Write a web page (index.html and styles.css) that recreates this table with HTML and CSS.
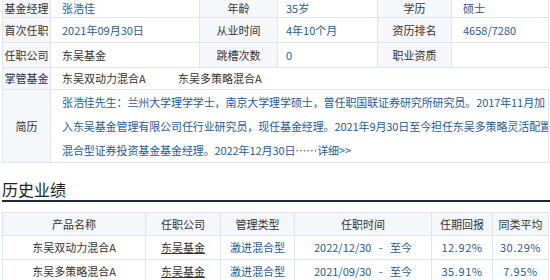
FILE: index.html
```html
<!DOCTYPE html>
<html lang="zh-CN">
<head>
<meta charset="utf-8">
<link rel="stylesheet" href="styles.css">
</head>
<body>
<div class="page">
  <table class="info">
    <colgroup>
      <col class="c1"><col class="c2"><col class="c3"><col class="c4"><col class="c5"><col class="c6">
    </colgroup>
    <tr class="r first">
      <th>基金经理</th><td class="blue">张浩佳</td>
      <th>年龄</th><td class="blue tight">35岁</td>
      <th>学历</th><td class="blue">硕士</td>
    </tr>
    <tr class="r">
      <th>首次任职</th><td class="blue">2021年09月30日</td>
      <th>从业时间</th><td class="blue tight">4年10个月</td>
      <th>资历排名</th><td class="blue">4658/7280</td>
    </tr>
    <tr class="r">
      <th>任职公司</th><td class="dark">东吴基金</td>
      <th>跳槽次数</th><td class="blue tight">0</td>
      <th>职业资质</th><td></td>
    </tr>
    <tr class="r4">
      <th class="navy">掌管基金</th>
      <td colspan="5" class="dark funds"><span class="fund">东吴双动力混合A</span><span class="fund">东吴多策略混合A</span></td>
    </tr>
    <tr>
      <th>简历</th>
      <td colspan="5" class="bio">张浩佳先生：兰州大学理学学士，南京大学理学硕士，曾任职国联证券研究所研究员。2017年11月加<br>入东吴基金管理有限公司任行业研究员，现任基金经理。2021年9月30日至今担任东吴多策略灵活配置<br>混合型证券投资基金基金经理。2022年12月30日……详细&gt;&gt;</td>
    </tr>
  </table>

  <h2 class="title">历史业绩</h2>

  <table class="hist">
    <colgroup>
      <col class="h1"><col class="h2"><col class="h3"><col class="h4"><col class="h5"><col class="h6">
    </colgroup>
    <tr class="head">
      <th>产品名称</th><th>任职公司</th><th>管理类型</th><th>任职时间</th><th>任期回报</th><th>同类平均</th>
    </tr>
    <tr>
      <td class="dark">东吴双动力混合A</td>
      <td class="dark"><span class="ul">东吴基金</span></td>
      <td class="blue">激进混合型</td>
      <td class="blue">2022/12/30&nbsp;&nbsp;&nbsp;-&nbsp;&nbsp;&nbsp;至今</td>
      <td class="blue pct">12.92%</td>
      <td class="blue pct">30.29%</td>
    </tr>
    <tr>
      <td class="dark">东吴多策略混合A</td>
      <td class="dark"><span class="ul">东吴基金</span></td>
      <td class="blue">激进混合型</td>
      <td class="blue">2021/09/30&nbsp;&nbsp;&nbsp;-&nbsp;&nbsp;&nbsp;至今</td>
      <td class="blue pct">35.91%</td>
      <td class="blue pct">7.95%</td>
    </tr>
  </table>
</div>
</body>
</html>
```

FILE: styles.css
```css
html, body {
  margin: 0;
  padding: 0;
  background: #ffffff;
  overflow: hidden;
}

.page {
  width: 546px;
  padding-left: 2px;
  font-family: "Noto Sans CJK SC", "Noto Sans", sans-serif;
  font-size: 11px;
  color: #333333;
}

table {
  border-collapse: collapse;
  table-layout: fixed;
  width: 546px;
}

.info {
  margin-top: -8px;
}

.info col.c1 { width: 48px; }
.info col.c2 { width: 149px; }
.info col.c3 { width: 78px; }
.info col.c4 { width: 100px; }
.info col.c5 { width: 74px; }
.info col.c6 { width: 97px; }

.info th,
.info td {
  border: 1px solid #dfe5ec;
  height: 24px;
  padding: 0;
  line-height: 24px;
  white-space: nowrap;
  overflow: hidden;
}

.info tr.first th,
.info tr.first td {
  height: 18px;
  line-height: 18px;
  padding-top: 6px;
}

.info th {
  background: #f5f7fa;
  font-weight: normal;
  color: #333333;
  text-align: center;
}

.info td {
  padding-left: 11px;
  text-align: left;
}

.info td.tight {
  padding-left: 8px;
}

.info tr.r4 th,
.info tr.r4 td {
  height: 21px;
  line-height: 21px;
}

.info tr.r4 td {
  border-right: none;
}

.navy {
  color: #1b2c55 !important;
}

.fund {
  display: inline-block;
  width: 116px;
}

.info td.bio {
  color: #1d5b9c;
  line-height: 24px;
  letter-spacing: -0.1px;
  padding-top: 0;
  padding-bottom: 0;
  height: 72px;
}

.blue {
  color: #1f5c94;
}

.dark {
  color: #333333;
}

.title {
  margin: 16px 0 0 0;
  padding: 0 0 1px 0;
  font-size: 16px;
  line-height: 20px;
  font-weight: normal;
  color: #222222;
  width: 548px;
  border-bottom: 2px solid #1c2942;
}

.hist {
  margin-top: 10px;
}

.hist col.h1 { width: 143px; }
.hist col.h2 { width: 75px; }
.hist col.h3 { width: 74px; }
.hist col.h4 { width: 137px; }
.hist col.h5 { width: 61px; }
.hist col.h6 { width: 56px; }

.hist th,
.hist td {
  border: 1px solid #dfe5ec;
  text-align: center;
  padding: 0;
  height: 23px;
  line-height: 23px;
  white-space: nowrap;
  overflow: hidden;
}

.hist tr.head th {
  background: #f3f6fa;
  font-weight: normal;
  color: #333333;
  height: 22px;
  line-height: 22px;
}

.ul {
  text-decoration: underline;
}

.pct {
  letter-spacing: 0.6px;
}
```
